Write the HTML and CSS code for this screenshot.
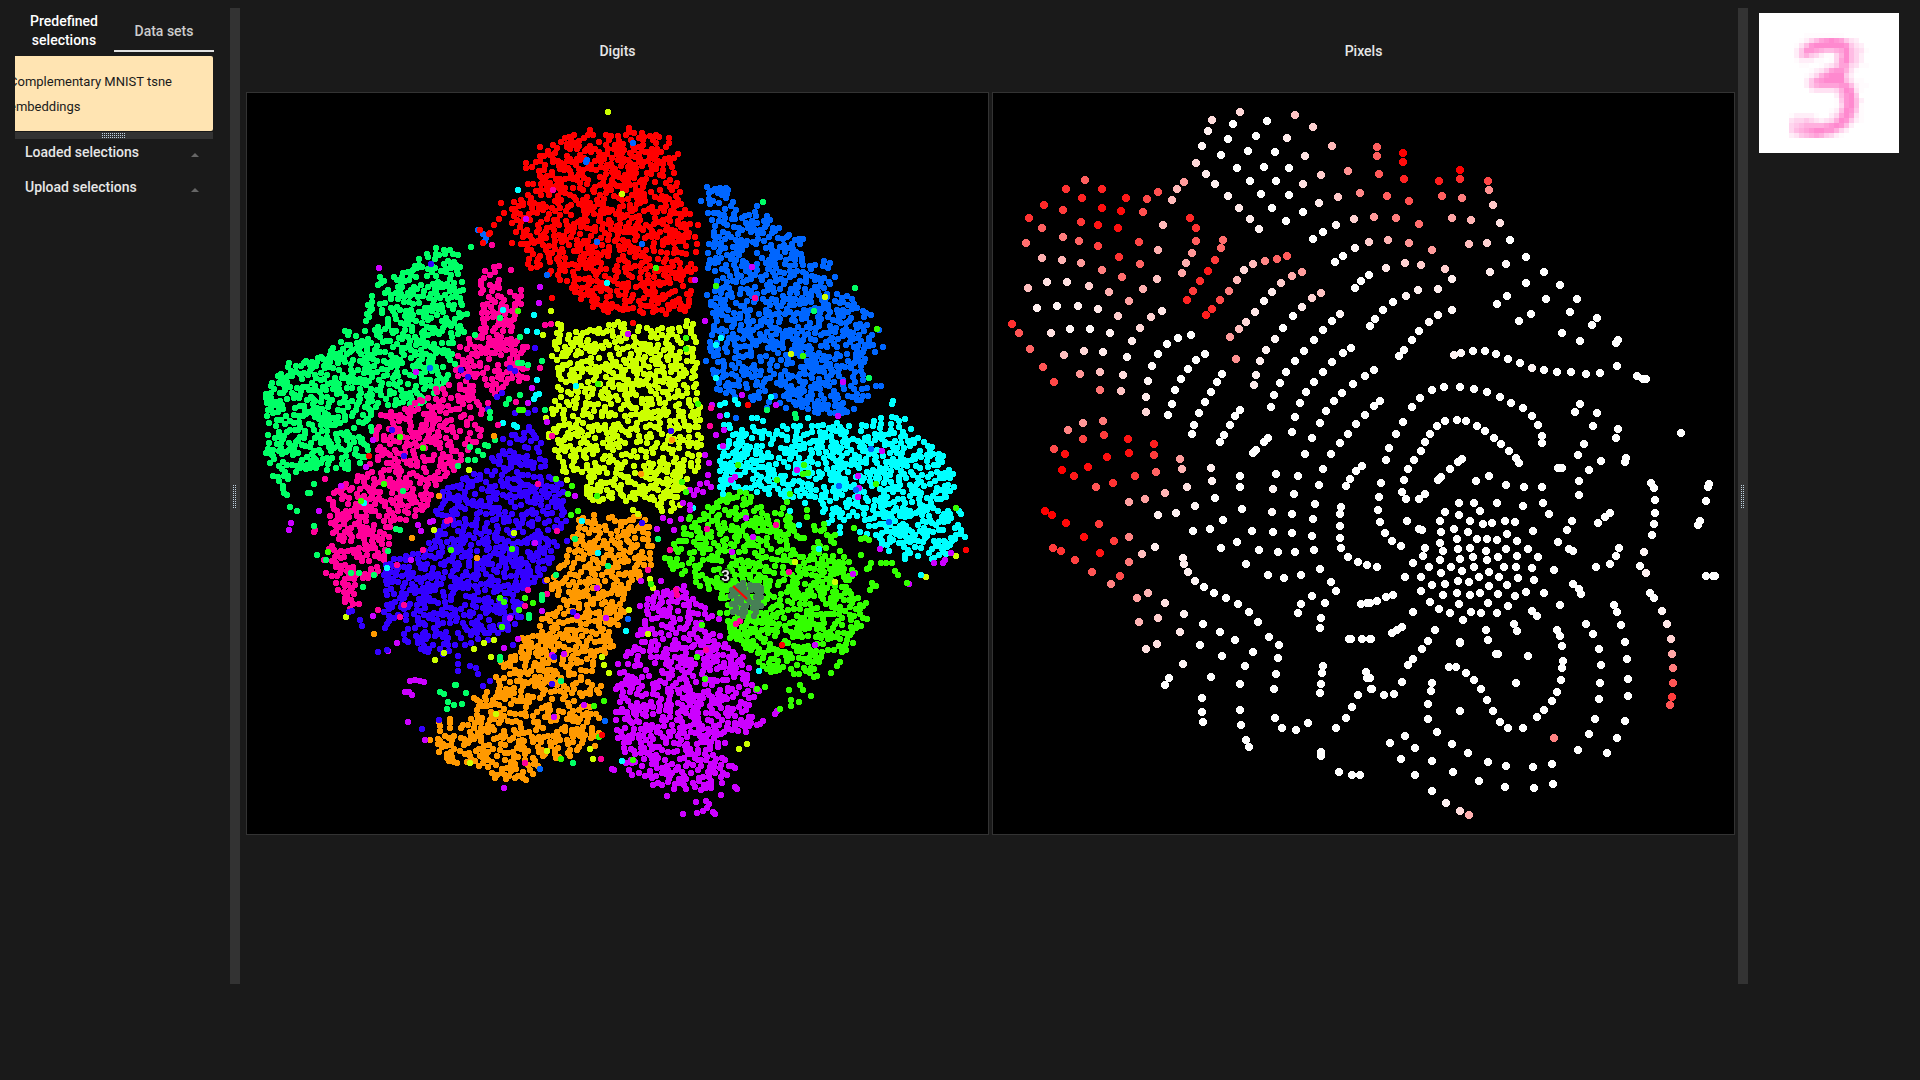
FILE: index.html
```html
<!DOCTYPE html>
<html lang="en">
<head>
<meta charset="utf-8">
<title>Dual t-SNE explorer</title>
<link rel="stylesheet" href="styles.css">
</head>
<body>
<div class="app">
  <aside class="sidebar">
    <div class="tabs" role="tablist">
      <button class="tab tab-strong" type="button" role="tab">Predefined selections</button>
      <button class="tab tab-current" type="button" role="tab" aria-selected="true">Data sets</button>
    </div>
    <div class="dataset-list">
      <button class="dataset" type="button">Complementary MNIST tsne embeddings</button>
    </div>
    <div class="gutter gutter-row"><span class="grip grip-row"></span></div>
    <button class="section" type="button">Loaded selections<span class="arrow"></span></button>
    <button class="section" type="button">Upload selections<span class="arrow"></span></button>
  </aside>
  <div class="gutter gutter-col"><span class="grip grip-col"></span></div>
  <main class="plots">
    <section class="plot">
      <h2 class="plot-title">Digits</h2>
      <div class="plot-frame">
        <canvas class="plot-canvas" id="digits" width="741" height="741" aria-label="Digits embedding"></canvas>
        <span class="plot-label">3</span>
      </div>
    </section>
    <section class="plot">
      <h2 class="plot-title">Pixels</h2>
      <div class="plot-frame">
        <canvas class="plot-canvas" id="pixels" width="741" height="741" aria-label="Pixels embedding"></canvas>
      </div>
    </section>
  </main>
  <div class="gutter gutter-col"><span class="grip grip-col"></span></div>
  <aside class="preview">
    <canvas class="preview-canvas" id="preview" width="28" height="28" aria-label="Mean image of the selection"></canvas>
  </aside>
</div>
<script src="plots.js"></script>
</body>
</html>
```
FILE: styles.css
```css
* { box-sizing: border-box; }

body {
  margin: 0;
  background: #1a1a1a;
  color: #e6e6e6;
  font-family: Roboto, "Liberation Sans", sans-serif;
  font-size: 14px;
}

button {
  margin: 0;
  padding: 0;
  border: 0;
  background: none;
  color: inherit;
  font: inherit;
  cursor: pointer;
}

.app {
  display: grid;
  grid-template-columns: 230px 10px minmax(0, 1fr) 10px 172px;
  min-height: calc(100vh - 92px);
  padding: 8px 0 4px;
}

.sidebar { padding: 2px 16px 0 14px; }

.tabs {
  display: grid;
  grid-template-columns: 1fr 1fr;
  height: 40px;
}

.tab {
  padding: 2px 8px 0;
  font-weight: 500;
  line-height: 19px;
  color: #ccc;
  border-bottom: 2px solid transparent;
}
.tab-strong { color: #fff; }
.tab-current { border-bottom-color: #e0e0e0; }

.dataset-list {
  height: 75px;
  margin: 6px 1px 0;
  overflow: hidden;
  border-radius: 0 2px 2px 0;
  background: #ffe4b2;
}
.dataset {
  display: block;
  margin-left: -6px;
  padding: 13px 16px 12px 0;
  color: #1a1a1a;
  font-size: 13px;
  line-height: 25px;
  text-align: left;
}

.gutter {
  display: flex;
  align-items: center;
  justify-content: center;
  background: #333;
}
.gutter-row { height: 7px; margin: 1px 1px 0; }
.grip {
  background:
    repeating-linear-gradient(180deg, transparent 0 1px, #333 1px 2px),
    repeating-linear-gradient(90deg, #bfd2e0 0 1px, transparent 1px 2px);
}
.grip-row { width: 24px; height: 5px; }
.grip-col { width: 4px; height: 23px; }

.section {
  display: flex;
  align-items: center;
  justify-content: space-between;
  width: 100%;
  height: 35px;
  padding: 0 15px 0 11px;
  font-weight: 500;
}
.gutter-row + .section { margin-top: -5px; }
.arrow {
  margin-top: 6px;
  border: 4px solid transparent;
  border-top: 0;
  border-bottom-color: #666;
}

.plots {
  display: grid;
  grid-template-columns: 1fr 1fr;
  gap: 3px;
  align-items: start;
  padding: 0 3px 0 6px;
}
.plot-title {
  margin: 0;
  padding-top: 2px;
  font-size: 14px;
  font-weight: 500;
  line-height: 82px;
  text-align: center;
}
.plot-frame {
  position: relative;
  border: 1px solid #333;
  background: #000;
}
.plot-canvas { display: block; width: 100%; }
.plot-label {
  position: absolute;
  left: 64%;
  top: 64%;
  font-size: 15px;
  font-weight: 700;
  line-height: 18px;
  color: #e6e6e6;
  text-shadow: 0 0 2px #000, 0 0 2px #000, 0 0 3px #000, 0 0 3px #000, 1px 1px 1px #000, -1px -1px 1px #000;
}

.preview { padding: 5px 21px 0 11px; }
.preview-canvas {
  display: block;
  width: 100%;
  background: #fff;
  image-rendering: pixelated;
}
```
FILE: plots.js
```javascript
// Small seeded generator, so the embedding looks the same on every load.
let seed = 20177;
function random() {
  seed = (seed + 0x6d2b79f5) | 0;
  let t = Math.imul(seed ^ (seed >>> 15), 1 | seed);
  t = (t + Math.imul(t ^ (t >>> 7), 61 | t)) ^ t;
  return ((t ^ (t >>> 14)) >>> 0) / 4294967296;
}

// Crisp dots, built from whole-pixel rows.
const SMALL = [[1, 4], [0, 6], [0, 6], [0, 6], [0, 6], [1, 4]];
const LARGE = [[2, 4], [1, 6], [0, 8], [0, 8], [0, 8], [0, 8], [1, 6], [2, 4]];
function dot(ctx, x, y, rows) {
  const left = Math.round(x - rows.length / 2);
  const top = Math.round(y - rows.length / 2);
  rows.forEach(([dx, w], i) => ctx.fillRect(left + dx, top + i, w, 1));
}

function pairs(text) {
  return text.trim().split(/\s+/).map((p) => p.split(",").map(Number));
}

function inside(poly, x, y) {
  let hit = false;
  for (let i = 0, j = poly.length - 1; i < poly.length; j = i++) {
    const [ax, ay] = poly[i];
    const [bx, by] = poly[j];
    if ((ay > y) !== (by > y) && x < ((bx - ax) * (y - ay)) / (by - ay) + ax) hit = !hit;
  }
  return hit;
}

/* ---- Digits ---- */
const digits = document.getElementById("digits").getContext("2d");
digits.translate(-247, -93);

const clusters = [
  ["#00ff66", "442,244 458,258 463,290 469,317 457,350 449,383 430,402 373,410 367,457 343,473 312,470 292,482 285,500 278,478 268,479 266,423 265,400 265,393 285,363 320,357 345,340 342,330 363,325 363,310 376,293 377,279 400,275 417,260 428,253"],
  ["#ff0099", "480,265 495,273 513,290 526,303 517,317 522,347 527,377 487,400 480,440 453,473 430,493 427,510 393,527 383,570 357,583 361,608 350,610 338,590 323,570 330,543 333,510 322,506 330,493 353,480 373,460 377,413 403,410 433,390 457,373 460,350 485,323 481,290"],
  ["#3300ff", "517,427 538,425 545,457 547,470 563,487 567,517 555,550 547,580 519,593 520,623 503,633 463,647 423,655 403,638 407,613 383,628 387,603 383,583 390,557 430,547 440,527 433,510 447,487 487,470 503,443"],
  ["#ccff00", "558,323 590,331 617,321 670,326 693,320 697,357 700,390 702,440 702,460 691,477 677,512 660,512 650,495 633,500 587,503 583,475 563,473 551,440 548,410 561,383 552,355"],
  ["#ff0000", "590,127 600,140 627,126 645,132 670,140 677,153 675,167 683,202 697,223 699,250 690,277 690,312 660,315 617,313 583,305 573,288 555,278 530,273 518,240 510,215 510,200 530,195 526,177 530,152"],
  ["#0066ff", "705,187 723,188 735,200 737,212 753,214 773,218 780,235 803,240 807,257 830,262 837,285 852,303 873,312 870,330 877,347 868,357 868,398 853,412 807,414 773,402 718,393 705,353 717,325 708,300 716,280 708,263 713,223"],
  ["#cc00ff", "661,592 688,580 697,603 717,617 720,643 743,657 753,677 760,700 743,713 762,724 737,733 720,752 737,770 718,785 697,792 667,787 643,785 630,773 625,753 616,743 616,707 620,673 637,627 643,602"],
  ["#ff9900", "598,515 647,515 655,540 653,567 633,583 622,618 613,647 592,660 603,690 583,703 600,713 600,733 593,747 557,760 545,762 530,777 501,783 473,763 447,764 430,743 440,722 455,715 477,724 475,690 497,688 497,663 517,655 527,630 557,607 547,583 562,561 573,540 580,521"],
  ["#00ffff", "725,423 767,430 820,423 857,428 880,416 910,418 919,443 940,443 953,477 952,493 940,503 968,515 970,533 935,560 903,557 875,540 868,520 847,519 827,519 820,502 800,503 777,492 747,493 717,493 717,467"],
  ["#33ff00", "750,490 763,508 783,508 800,533 827,531 840,548 853,560 855,593 865,603 857,632 850,650 822,653 812,675 790,675 763,671 751,648 733,643 723,627 720,597 700,587 663,570 673,543 687,520 710,503 733,490"]
];

for (const [colour, outline] of clusters) {
  const poly = pairs(outline);
  const xs = poly.map((p) => p[0]);
  const ys = poly.map((p) => p[1]);
  const x0 = Math.min(...xs), x1 = Math.max(...xs), y0 = Math.min(...ys), y1 = Math.max(...ys);
  const placed = [];
  const tries = ((x1 - x0) * (y1 - y0)) / 20;
  digits.fillStyle = colour;
  for (let i = 0; i < tries; i++) {
    const x = x0 + random() * (x1 - x0);
    const y = y0 + random() * (y1 - y0);
    if (!inside(poly, x + random() * 6 - 3, y + random() * 6 - 3)) continue;
    if (placed.some(([px, py]) => (px - x) ** 2 + (py - y) ** 2 < 9)) continue;
    placed.push([x, y]);
    dot(digits, x, y, SMALL);
  }
}

// Points that fall outside the body of their own cluster.
const strays = {
  "#ccff00": "608,112 622,194 551,311 543,335 825,297 791,354 546,418 552,435 469,470 434,530 514,533 346,617 444,653 435,660 484,643 474,649 494,640 491,657 602,657 604,665 609,673 496,714 547,751 590,749 593,759 470,763 739,749 747,744 650,579 653,588 629,610 648,634 795,562 835,582 956,556 926,577 566,472 567,480 633,510 638,514",
  "#00ffff": "518,190 607,283 503,310 534,315 527,331 537,332 537,380 536,395 539,394 534,399 503,423 514,425 517,427 576,386 364,503 387,568 582,521 716,378 771,397 720,405 725,403 735,400 738,404 727,415 752,418 757,418 763,421 808,418 721,338 716,345 892,404 893,401 626,631 622,761 759,671 819,549 840,533 840,527 867,534 860,532 799,525 934,558 946,554 921,575 693,508 723,494 790,511 828,523 598,553",
  "#cc00ff": "379,268 526,219 540,287 539,303 416,372 532,388 528,403 547,422 373,440 366,467 341,486 291,523 289,530 319,511 418,525 421,531 430,522 433,521 535,543 411,560 373,616 388,651 397,643 518,639 504,648 510,618 542,611 597,588 606,618 577,616 575,496 552,655 564,654 628,334 695,280 705,321 752,267 742,395 712,405 720,416 716,435 723,446 724,430 705,455 709,463 776,405 838,416 843,382 882,451 797,470 708,475 735,477 731,480 700,484 697,490 707,483 703,492 711,487 690,490 694,495 683,503 690,510 663,518 670,521 681,519 674,530 657,529 641,581 661,581 690,505 746,518 753,537 880,549 858,476 859,488 858,497 943,563 945,560 951,553 934,563 909,584 853,574 732,552 408,722 425,740 504,788 410,681 415,680 420,681 424,682 405,692 409,692 412,695 618,664 618,686 584,705 554,717 612,769 614,770 667,796 683,814 696,802 706,801 709,804 707,808 703,811 697,813 713,812 715,814 721,795 735,787 737,789 777,711 775,714 759,691 757,725 763,721 815,645",
  "#ff0099": "492,245 494,267 499,266 511,270 553,190 521,290 545,325 551,324 523,347 527,347 540,368 526,378 516,402 498,425 325,479 314,532 315,530 447,521 450,520 423,550 378,610 400,617 404,605 397,565 528,590 525,606 547,594 538,484 557,531 601,759 525,763 552,436 755,298 711,408 710,426 670,550 676,590 677,595 736,624 740,621 706,650 648,570 707,529 776,525 789,572",
  "#3300ff": "431,264 461,370 468,377 510,368 515,371 535,348 497,397 502,393 488,409 515,413 528,413 535,410 392,430 404,456 352,611 349,612 360,620 362,626 567,541 378,652 387,650 458,656 458,664 458,671 470,666 476,668 478,674 490,681 483,686 439,720 422,729 573,612 552,684 554,657 642,523 671,431 513,645",
  "#0066ff": "587,160 586,162 478,230 483,234 486,238 485,241 547,275 597,242 633,143 642,244 701,201 430,368 879,330 883,347 881,386 876,386 757,206 736,418 818,413 767,408 871,449 839,486 856,490 889,522 605,721 540,769 628,619",
  "#00ff66": "471,247 500,318 520,337 518,363 522,363 542,361 528,365 475,335 520,395 545,410 509,399 506,404 490,412 490,418 495,440 485,445 488,446 478,451 483,455 475,460 468,460 458,466 470,447 308,493 314,484 310,493 290,507 297,511 314,526 317,555 326,560 388,551 400,530 396,529 403,491 374,575 359,573 351,573 363,587 542,600 529,615 529,618 542,595 542,598 575,539 608,566 556,575 561,681 573,763 440,692 444,694 448,702 454,705 462,704 447,709 455,685 466,693 456,685 500,657 500,660 763,202 855,288 814,311 869,378 767,410 795,414 796,418 658,539",
  "#33ff00": "518,311 598,384 519,410 523,410 400,437 423,448 384,484 361,501 328,552 451,550 512,549 556,479 572,486 568,494 578,511 571,515 597,496 604,701 594,706 599,737 561,759 500,598 504,602 525,598 519,610 533,603 502,627 651,584 682,482 686,492 686,338 686,349 698,404 716,286 877,329 803,356 656,268 738,465 804,465 808,473 803,474 777,480 790,494 787,502 807,510 807,517 814,526 824,524 854,528 861,539 869,540 865,538 835,535 861,555 871,563 869,568 867,569 881,563 886,563 892,563 895,571 898,575 872,583 873,586 876,586 870,590 907,583 876,484 956,508 789,690 800,685 803,690 811,696 791,700 791,706 799,702 780,709 757,689 765,687 840,662 837,666 831,673 817,676 814,677 841,647 863,618 867,619 866,603 863,606 702,625 697,657 705,679 633,760",
  "#ff0000": "499,219 494,225 490,233 480,230 483,243 501,203 489,234 369,456 512,243 552,298 633,323 748,405 602,735 782,645 966,550 504,213 514,216 517,213 523,205",
  "#ff9900": "494,436 439,496 374,634 412,538 477,558 672,440 641,474"
};
for (const [colour, list] of Object.entries(strays)) {
  digits.fillStyle = colour;
  for (const [x, y] of pairs(list)) dot(digits, x, y, SMALL);
}

// Current selection and its connector.
const selection = "732,590 736,588 739,586 743,583 744,588 750,585 754,586 758,586 761,588 735,594 740,592 745,592 731,596 737,599 742,598 747,595 741,603 732,604 736,608 733,612 739,613 743,616 745,612 746,606 750,602 754,603 756,597 760,593 761,597 751,590 758,602 761,606 757,607 756,612 754,616 753,608 736,603 743,609 761,592 757,591 748,599";
digits.fillStyle = "#478055";
for (const [x, y] of pairs(selection)) dot(digits, x, y, SMALL);
digits.strokeStyle = "#ff0000";
digits.lineWidth = 2;
digits.beginPath();
digits.moveTo(733, 586);
digits.lineTo(747, 599);
digits.stroke();

/* ---- Pixels ----
   Four quadrants in third-of-a-pixel units: x,y or x,y,whiteness in 255ths. */
const quadrants = [
  [-3, -3, `66,701,48 86,728,85 120,777,100 159,831,85 193,875,70 285,270,95 228,298,50 336,296,35 276,323,35 408,324,25 163,346,40 219,361,60 335,355,15 392,362,10 116,384,50 155,414,95 274,395,55 325,405,20 384,413,15 108,459,110 218,440,125 268,453,100 323,468,65 447,456,70 458,365,80 471,328,75 503,306,80 545,329,185 560,296,185 582,275,155
  157,504,175 217,510,180 273,519,155 387,501,50 449,521,100 503,481,175 518,405,185 336,541,125 397,562,110 113,594,190 172,575,225 231,577,225 297,588,205 357,605,175 460,598,175 500,567,195 417,634,160 142,655,240 201,647,245 263,649,238 324,657,232 384,678,205 483,681,210 516,663,230 450,714,215 182,730,225 240,717,245 299,718,248 360,729,240 427,754,235 222,795,190 281,784,215 340,786,235 411,801,245 270,852,150 330,846,190 400,854,220 330,900,115 393,903,195 468,966,215 467,922,235 473,873,245 485,829,248 503,792 530,762 565,744 604,735
  280,998,150 340,994,120 233,1020,130 279,1047,70 341,1034,60 414,1047,20 493,1062,30 192,1077,75 225,1091,15 352,1100,15 417,1090,15 491,1094,60 570,1106,155
  599,385,40 619,413,50 617,453,95 605,489,150 589,520,175 576,548,165 698,451,110 693,474,105 676,510,60 655,542,25 630,573,45 609,603,60 591,630,35 648,676,30 665,657,45 691,631,75 717,602,125 740,570,185 762,540,215 789,521,185 825,513,135 861,506,100 892,497,90 719,740,155 747,717,190 768,696,215 795,665,230 821,633,248 845,605,235 872,580,205 906,559,170 935,545,155 737,807,145 792,885,235 799,854,240 811,813,238 828,780,242 854,747,245 879,713 909,679 936,651,235 965,625,210 992,610,195
  665,90,220 751,66,215 654,123,240 636,168,245 617,218,215 649,251,235 675,282,240 713,318,240 748,355,232 780,387,235 807,417,242 729,102 714,147 693,194 740,233 779,273 812,313 847,353 889,393 774,183 798,138 830,93 823,230 859,272 897,315 939,366 855,186 897,234 892,144,235 915,74,195 968,111,210 1025,168,185 1073,242,145 1110,309,135 945,198,228 993,254,205 1043,320,200 1092,387,210 939,282,225 986,340,235 1039,405,245 968,447 999,427 1034,517 1058,497 1094,474,245 1136,456,205 1094,595 1113,574 1136,555
  534,975 545,942 556,901 572,867 593,836 619,810 644,791 605,1031 613,1005 628,969 644,936 662,906 680,875 696,853 691,1056 702,1035 719,1005 736,977 749,959 788,1090 798,1080 821,1056 835,1045 843,951 853,916 869,880 888,846 914,813 941,783 971,750 999,720 1025,692 1049,672,245 906,1026 914,980 929,940 948,906 971,876 998,846 1026,816 1058,789 1084,773 945,1092 965,1044 989,998 1009,962 1031,933 1057,908 1088,882 1125,858 1024,1092 1049,1058 1073,1031 1099,1002 1125,975`],
  [1137, -3, `22,170,95 21,198,95 27,252,90 50,318,95 12,380,155 54,450,180 78,384,125 116,458,150 99,188,0 99,216,12 103,268,35 118,333,80 146,403,110 187,479,155 207,273,30 216,317,95 246,385,165 271,239,0 269,267,45 276,324,125 303,390,180 297,462,190 354,272,70 356,299,145 368,345,200 389,398,225 351,458,210 421,450 468,501 408,522,248 360,545,235 467,579 521,545 569,585 412,617 381,642 529,627 621,627 599,667 681,684 666,705 446,693 482,672 577,728 629,752 739,760 745,751 741,828 801,858 820,867 827,866 933,1028
  48,533,230 106,518,210 153,524,205 224,538,205 246,567,238 204,597,238 144,600,240 107,617,242 69,636 39,660 15,687 1,708 88,797 102,780 126,750 148,723 176,695,248 203,674,248 246,660,248 11,839 251,795,242 272,789,248 309,783 345,783 379,792 414,807 449,820 486,834,245 523,841 560,845 602,846 648,851 691,850 30,933 11,948 100,995 126,952 150,923 186,899 222,890 269,890 312,896 351,906 391,921 424,938 458,955 486,977 504,1005 516,1038 515,1059 78,1031 57,1073 48,1109 133,1110 152,1084 165,1057 180,1031 201,1007 226,993 261,989 288,993 321,1008 346,1024 371,1044 393,1062 417,1083 437,1105 447,1119 264,1115 276,1106 630,941 615,966 682,969 669,1008 745,1017 738,1044 643,1062 624,1095 692,1113 768,1104 765,1116`],
  [-3, 1107, `216,29,0 253,48,25 293,21,12 319,80,85 369,69,50 435,48,60 499,35,100 576,28,180 416,125,160 464,117,160 525,98,180 591,80,225 663,24,238 667,62,242 166,152,0 187,165,0 227,189,8 328,191,60 283,230,12 372,244,60 416,231,130 190,263,60 213,273,50 254,299,65 331,280,20 306,336,85 416,306,120 455,281,190 494,261,238 504,165,240 558,160,242 615,137,245 391,347,75 362,373,130 442,413,160 473,400,180 525,428,225 447,485,180 505,474,205 582,461,240 569,517,230 501,553,225 469,567,225 578,611,245 537,653 525,674 580,293,240 582,311,235 594,336,238 615,362,245 642,381 671,399 707,414 744,431 778,456 805,486 837,530 868,555 863,595 859,643 851,687
  675,113 699,180 660,206 609,213 750,47 751,82 757,146 786,212 740,245 693,264 767,311 807,269 849,215 845,155,248 848,87,245 857,42 923,47 912,102 905,162 906,219 914,276 863,277 833,345 882,353 933,345 1000,27 986,76 975,131 968,176 966,228 971,269 991,326 1023,365 1037,393 1006,428 967,408 934,432 924,459 994,473 989,503 1115,17 1099,33 1081,57 1069,79 1052,140 1050,162 1050,198 1051,233 1052,264 1074,291 1104,307 1131,315 1113,432 1131,429
  638,491 690,517 735,540 789,576 765,617 750,672 631,554 696,587 662,650 637,714 635,755 639,785 749,751 753,794 769,840 777,860 855,774 876,803 918,810 954,788 999,618 996,639 993,671 989,699 1077,536 1082,536 1116,536 1140,538 1127,637 1132,655 1142,687 1104,705 1086,740 1067,774 1039,804 993,875 993,887 1047,936 1086,944 1110,944`],
  [1137, 1107, `114,28 102,59 96,96 108,117 147,118 165,103 34,70 27,111 24,150 30,186 45,219 66,243 94,257 204,60 214,51 240,27 112,183 148,206 156,210 317,63 357,47 407,75 462,81 516,81 519,129 537,162 460,139 381,129 312,129 268,129 226,155 267,164 329,154 210,182 299,184 340,193 367,188 404,182 435,186 252,206 212,217 294,216 411,222 489,212 261,237 320,238 351,236 380,239 440,243 166,263 210,248 219,272 263,268 299,263 348,273 407,268 474,266 158,287 210,299 269,298 309,292 351,301 385,292 441,288 504,291 129,309 178,322 243,320 276,332 312,320 356,336 402,320 438,320 486,323 20,321 104,350 153,351 213,339 263,364 297,366 327,351 387,351 444,354 492,360 553,330 186,375 224,371 357,377 411,375 153,393 220,406 261,398 301,405 330,399 384,402 434,408 467,397 522,399 569,434 179,425 208,448 240,460 268,431 303,455 333,458 354,429 381,460 413,438 278,479 129,456 485,452 501,467 431,493 441,513 20,423 49,411 70,405 0,428 66,518 81,511 97,501 4,538 196,510 174,543 156,567 129,597 115,615 95,666 71,701 42,705 7,687 0,655 349,510 354,540 378,582 384,583 473,588 270,546 269,550 437,668 270,754 238,622 259,620 288,639 313,660 334,687 352,720 370,754 390,786 415,804 459,804 501,772 521,751 546,722 561,695 573,660 576,624 578,603 575,557 570,528 562,510 187,668 183,693 173,733 174,777 201,816 246,852 294,879 355,905 408,917 490,921 545,912 550,973 491,983 404,980 326,962 249,935 186,903 136,863 106,827 59,849 93,896 135,945 185,993 228,1028,242 270,1053,220 297,1065,175 553,833,130 624,870 656,822 674,776 686,716 690,669 692,614 686,566 669,522 647,491 711,879 741,835 764,783 773,707 774,658 770,596 764,545 754,496 741,456 731,435
  563,24 577,24 658,30 628,62 628,104 605,183 591,209 565,247 596,266 610,273 684,189 705,171 719,158 747,264 737,287 719,313 677,322 609,373 626,386 634,402 842,69 852,84 855,120 855,158 853,192 847,225 822,276,245 809,319 828,339,240 839,398 853,413 877,452,245 891,491,232 902,536,210 907,581,165 909,624,125 909,669,85 905,712,60 901,735,85 1015,80 1016,73 1009,124 990,183 985,194 1009,348 1029,348 1035,348`]
];

const pixels = document.getElementById("pixels").getContext("2d");
for (const [ox, oy, list] of quadrants) {
  for (const [x, y, w = 255] of pairs(list)) {
    pixels.fillStyle = `rgb(255,${w},${w})`;
    dot(pixels, (x + ox) / 3 - 2, (y + oy) / 3 - 2, LARGE);
  }
}

/* ---- Mean image of the selection: rows from y=4, columns from x=6 ---- */
const rows = [
  "...00000000.....", "..013578987421..", ".02589999998421.", ".148876556795320",
  ".14643100369531.", ".011100.0379531.", "..00..0124773200", "....0124788620..",
  "...0136899941...", "...147899995200.", "...1467777885100", "....12222369820.",
  ".........15894..", ".........048951.", ".........038950.", "........0159840.",
  "011110..1379720.", "233432123698410.", "3456666789851...", "356789988631....",
  "12456764310....."
];
const preview = document.getElementById("preview").getContext("2d");
rows.forEach((row, y) => {
  [...row].forEach((c, x) => {
    if (c === ".") return;
    preview.fillStyle = `rgba(255,137,207,${(Number(c) + 0.3) / 9.3})`;
    preview.fillRect(x + 6, y + 4, 1, 1);
  });
});
```
